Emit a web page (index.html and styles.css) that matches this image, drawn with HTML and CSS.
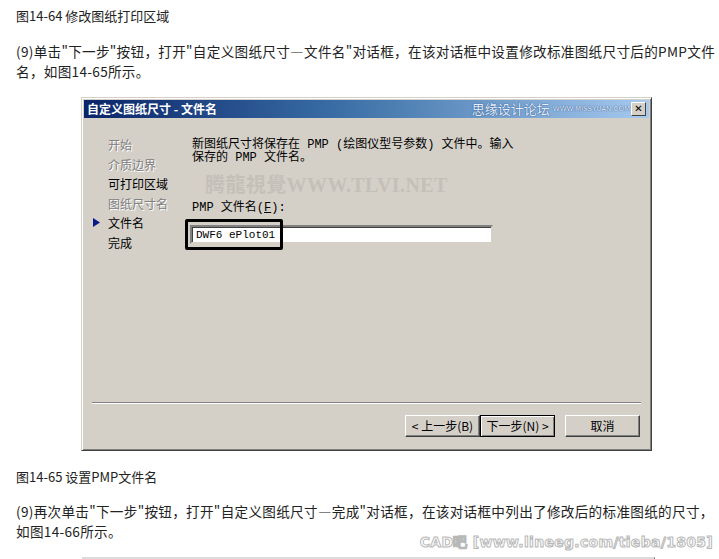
FILE: index.html
```html
<!DOCTYPE html>
<html lang="zh">
<head>
<meta charset="utf-8">
<title>图14-65 设置PMP文件名</title>
<link rel="stylesheet" href="styles.css">
</head>
<body>
<div class="page">
  <p class="caption">图14-64 修改图纸打印区域</p>
  <p class="para">(9)单击"下一步"按钮，打开"自定义图纸尺寸—文件名"对话框，在该对话框中设置修改标准图纸尺寸后的PMP文件名，如图14-65所示。</p>

  <div class="dialog">
    <div class="titlebar">
      <span class="title">自定义图纸尺寸 - 文件名</span>
      <span class="tb-mark"><span class="tb-cn">思缘设计论坛</span><span class="tb-en">WWW.MISSYUAN.COM</span></span>
      <span class="close">&#x2715;</span>
    </div>
    <div class="dlg-body">
      <ul class="nav">
        <li class="off"><span class="mk"></span>开始</li>
        <li class="off"><span class="mk"></span>介质边界</li>
        <li><span class="mk"></span>可打印区域</li>
        <li class="off"><span class="mk"></span>图纸尺寸名</li>
        <li><span class="mk"><svg width="8" height="9" viewBox="0 0 8 9"><path d="M0 0 L7 4.5 L0 9 Z" fill="#0a1a8a"/></svg></span>文件名</li>
        <li><span class="mk"></span>完成</li>
      </ul>
      <div class="panel">
        <p class="desc">新图纸尺寸将保存在 PMP (绘图仪型号参数) 文件中。输入<br>保存的 PMP 文件名。</p>
        <p class="wm">腾龍視覺WWW.TLVI.NET</p>
        <p class="label">PMP 文件名(<u>F</u>):</p>
        <div class="field">
          <span class="input">DWF6 ePlot01</span>
          <span class="hl"></span>
        </div>
      </div>
    </div>
    <div class="footer">
      <div class="sep"></div>
      <div class="buttons">
        <span class="btn">&lt; 上一步(<u>B</u>)</span><span class="btn def">下一步(<u>N</u>) &gt;</span><span class="btn cancel">取消</span>
      </div>
    </div>
  </div>

  <p class="caption cap2">图14-65 设置PMP文件名</p>
  <p class="para para2">(9)再次单击"下一步"按钮，打开"自定义图纸尺寸—完成"对话框，在该对话框中列出了修改后的标准图纸的尺寸，如图14-66所示。</p>
  <div class="next-dialog"></div>
  <span class="site-mark">CAD吧 [www.lineeg.com/tieba/1805]</span>
</div>
</body>
</html>
```
FILE: styles.css
```css
html, body {
  margin: 0;
  padding: 0;
  background: #ffffff;
}
.page {
  position: relative;
  padding: 0 2px 0 16px;
  height: 559px;
  overflow: hidden;
  font-family: "Noto Sans CJK SC", "Liberation Sans", sans-serif;
  color: #222;
}
.caption {
  margin: 6px 0 0 0;
  font-size: 13px;
  line-height: 20px;
}
.para {
  margin: 15px 0 0 0;
  font-size: 13.6px;
  line-height: 20px;
  letter-spacing: 0.3px;
}
.dialog {
  margin: 16px 0 0 65px;
  width: 565px;
  height: 348px;
  background: #d4d0c8;
  border: 1px solid #404040;
  border-top-color: #d4d0c8;
  border-left-color: #d4d0c8;
  box-shadow: inset 1px 1px 0 #ffffff, inset -1px -1px 0 #808080;
  padding: 2px;
  display: flex;
  flex-direction: column;
  color: #000;
}
.titlebar {
  height: 18px;
  background: linear-gradient(to right, #0a246a 0%, #3a6ea5 45%, #a6caf0 100%);
  display: flex;
  align-items: center;
  padding: 0 3px 0 3px;
}
.title {
  color: #fff;
  font-weight: bold;
  font-size: 12px;
  line-height: 18px;
  flex: 1;
}
.tb-mark {
  display: flex;
  align-items: center;
  gap: 3px;
  margin-right: 1px;
}
.tb-cn {
  font-size: 13px;
  line-height: 18px;
  color: #e6eef8;
  text-shadow: 0 0 1px #2f5a96, 0 0 1px #2f5a96;
}
.tb-en {
  font-family: "DejaVu Sans", sans-serif;
  font-size: 7px;
  line-height: 18px;
  color: #e6eef8;
  text-shadow: 0 0 1px #2f5a96, 0 0 1px #2f5a96;
}
.close {
  width: 13px;
  height: 12px;
  background: #d4d0c8;
  border: 1px solid #404040;
  border-top-color: #fff;
  border-left-color: #fff;
  font-size: 10px;
  line-height: 12px;
  text-align: center;
  font-weight: bold;
  font-family: "DejaVu Sans", sans-serif;
  color: #000;
}
.dlg-body {
  flex: 1;
  display: flex;
  padding: 17px 0 0 9px;
}
.nav {
  list-style: none;
  margin: 0;
  padding: 0;
  width: 99px;
  font-size: 12px;
  line-height: 19.5px;
}
.nav li {
  display: flex;
  align-items: center;
}
.nav .off {
  color: #808080;
  text-shadow: 1px 1px 0 #fff;
}
.mk {
  width: 15px;
  display: inline-flex;
  align-items: center;
}
.panel {
  flex: 1;
  font-family: "Liberation Mono", "Noto Sans CJK SC", monospace;
  font-size: 12px;
}
.desc {
  margin: 4px 0 0 0;
  line-height: 12.5px;
}
.wm {
  margin: 9px 0 0 13px;
  font-family: "Liberation Serif", "Noto Sans CJK SC", serif;
  font-weight: bold;
  font-size: 20px;
  line-height: 24px;
  color: #c4c0b8;
  letter-spacing: 0.4px;
}
.label {
  margin: 2px 0 0 0;
  line-height: 18px;
}
.field {
  position: relative;
  margin: 8px 0 0 -2px;
  width: 303px;
}
.input {
  display: block;
  height: 15px;
  background: #fff;
  border: 2px solid #808080;
  border-right-color: #d4d0c8;
  border-bottom-color: #d4d0c8;
  box-shadow: inset 1px 1px 0 #404040;
  padding: 0 0 0 4px;
  font-family: "Liberation Mono", monospace;
  font-size: 11px;
  line-height: 16px;
  color: #000;
}
.hl {
  position: absolute;
  left: -5px;
  top: -6px;
  width: 92px;
  height: 25px;
  border: 3px solid #000;
  border-radius: 2px;
}
.footer {
  padding: 0 8px 11px 8px;
}
.sep {
  height: 0;
  border-top: 1px solid #808080;
  border-bottom: 1px solid #fff;
}
.buttons {
  display: flex;
  justify-content: flex-end;
  margin-top: 11px;
  padding-right: 1px;
}
.btn {
  width: 71px;
  height: 18px;
  line-height: 18px;
  text-align: center;
  font-size: 12px;
  background: #d4d0c8;
  border: 1px solid #404040;
  border-top-color: #fff;
  border-left-color: #fff;
  box-shadow: inset -1px -1px 0 #808080;
  padding: 1px;
}
.btn.def {
  border-color: #000;
  box-shadow: inset 1px 1px 0 #fff, inset -1px -1px 0 #808080;
}
.btn.cancel {
  margin-left: 10px;
}
.btn u {
  text-decoration: none;
}
.cap2 {
  margin-top: 16px;
}
.para2 {
  margin-top: 14px;
}
.next-dialog {
  margin: 16px 0 0 66px;
  width: 572px;
  height: 10px;
  border-top: 2px solid #dcdcdc;
  border-right: 1px solid #404040;
}
.site-mark {
  position: absolute;
  right: 6px;
  top: 534px;
  font-family: "DejaVu Sans", sans-serif;
  font-size: 14px;
  font-weight: bold;
  color: #fff;
  -webkit-text-stroke: 1px #b8b8b8;
  letter-spacing: 0.3px;
}
```
